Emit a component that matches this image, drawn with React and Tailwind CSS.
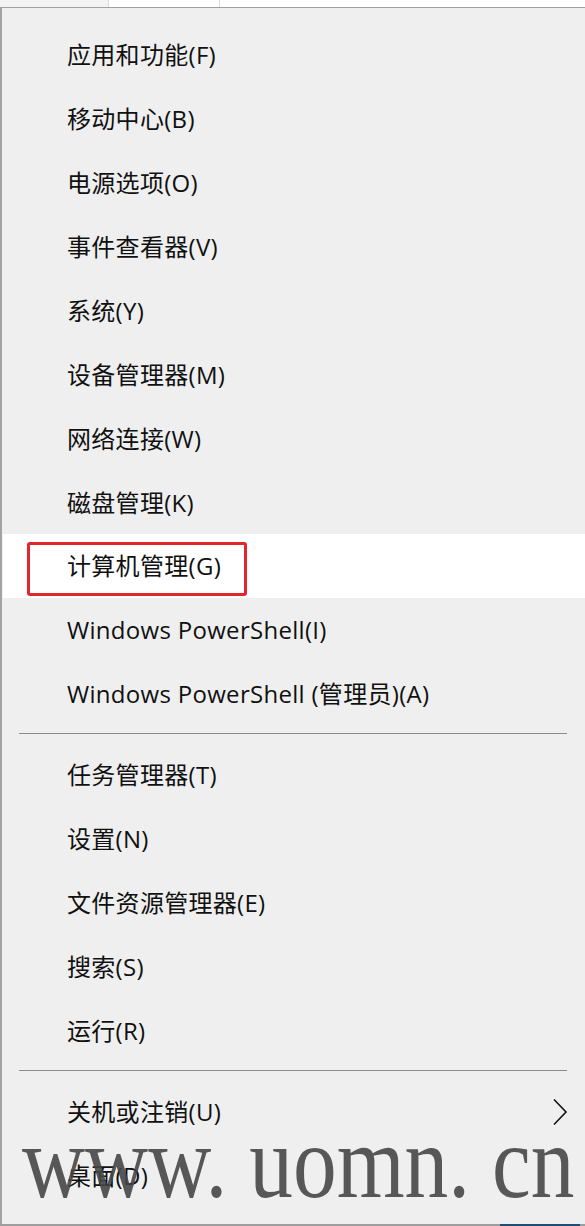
import React from 'react';

// Win+X quick link menu
const GROUPS = [
  [
    '应用和功能(F)',
    '移动中心(B)',
    '电源选项(O)',
    '事件查看器(V)',
    '系统(Y)',
    '设备管理器(M)',
    '网络连接(W)',
    '磁盘管理(K)',
    '计算机管理(G)',
    'Windows PowerShell(I)',
    'Windows PowerShell (管理员)(A)',
  ],
  ['任务管理器(T)', '设置(N)', '文件资源管理器(E)', '搜索(S)', '运行(R)'],
  ['关机或注销(U)', '桌面(D)'],
];

const FONT = {
  fontFamily: '"Open Sans", "Noto Sans CJK SC", sans-serif',
};

const MenuItem = ({ label }) => {
  const active = label === '计算机管理(G)';
  const hasSub = label === '关机或注销(U)';
  return (
    <div
      className={`relative h-[64px] flex items-center pl-[65px] pr-[16px] text-[24px] tracking-[0.3px] text-[#111] ${
        active ? 'bg-white ml-[1px] -mt-px' : ''
      }`}
    >
      <span className={active ? '-ml-px' : ''}>{label}</span>
      {hasSub && (
        <svg className="ml-auto mr-[1px]" width="16" height="28" viewBox="0 0 16 28" fill="none">
          <path d="M2 1.5 L14 14 L2 26.5" stroke="#111" strokeWidth="1.6" />
        </svg>
      )}
      {active && (
        <div className="absolute left-[24px] top-[8px] w-[220px] h-[54px] border-[3px] border-[#e3262c] rounded-[3px]" />
      )}
    </div>
  );
};

const Separator = () => (
  <div className="pt-[7px] pb-[9px] pl-[17px] pr-[18px]">
    <div className="h-px bg-[#8c8c8c]" />
  </div>
);

export default function App() {
  return (
    <div className="relative w-[585px] h-[1226px] flex flex-col bg-[#efefef] overflow-hidden" style={FONT}>
      {/* strip of the window behind */}
      <div className="h-[7px] flex">
        <div className="w-[108px] bg-[#f3f3f3]" />
        <div className="w-px bg-[#d8d8d8]" />
        <div className="w-[110px] bg-white" />
        <div className="w-px bg-[#dcdcdc]" />
        <div className="flex-1 bg-white" />
      </div>
      <div className="h-px bg-[#a0a0a0]" />

      <div className="flex-1 border-l-2 border-[#a3a3a3] pt-[15px]">
        {GROUPS.map((items, gi) => (
          <div key={gi}>
            {gi > 0 && <Separator />}
            {items.map((label) => (
              <MenuItem key={label} label={label} />
            ))}
          </div>
        ))}
      </div>

      <div className="h-[2px] flex">
        <div className="w-[500px] bg-[#9e9e9e]" />
        <div className="w-[80px] bg-[#1e4e74]" />
        <div className="flex-1 bg-[#9e9e9e]" />
      </div>

      {/* watermark */}
      <div
        className="absolute left-[22px] top-[1110px] text-[104px] leading-none whitespace-nowrap text-[rgba(70,70,70,0.9)] pointer-events-none origin-left scale-x-[0.84]"
        style={{ fontFamily: '"Liberation Serif", serif' }}
      >
        www. uomn. cn
      </div>
    </div>
  );
}
